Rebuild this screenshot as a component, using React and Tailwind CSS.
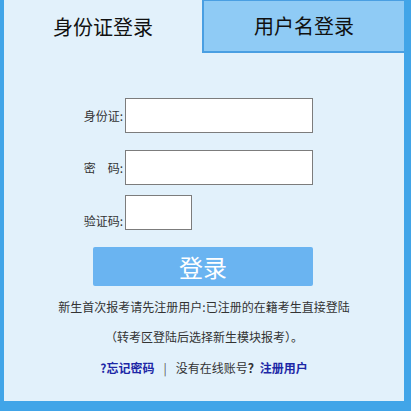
import React from "react";

const font = { fontFamily: '"Noto Sans CJK SC", "Noto Sans", sans-serif' };

const Row = ({ label, width, className = "" }) => (
  <div className={"flex items-center " + className}>
    <label className="w-[119px] text-right text-[12px] text-[#333]">{label}</label>
    <input
      type="text"
      className={"ml-[2px] h-[35px] border border-[#7c7c7c] bg-white outline-none " + width}
    />
  </div>
);

const App = () => {
  return (
    <div className="w-[411px] h-[411px] bg-[#41a5e8] pl-[4px] pr-[7px] pb-[10px]" style={font}>
      <div className="h-full bg-[#e2f1fb] flex flex-col">
        <div className="flex h-[53px]">
          <div className="w-[198px] flex items-center justify-center text-[20px] text-[#111]">
            身份证登录
          </div>
          <div className="flex-1 flex items-center justify-center text-[20px] text-[#111] bg-[#8fcbf5] border-l-2 border-b-2 border-t border-[#4a9fe2]">
            用户名登录
          </div>
        </div>

        <div className="flex flex-col mt-[45px]">
          <Row label="身份证:" width="w-[188px]" />
          <Row label="密　码:" width="w-[188px]" className="mt-[17px]" />
          <div className="flex items-end mt-[10px]">
            <label className="w-[119px] text-right text-[12px] text-[#333]">验证码:</label>
            <input
              type="text"
              className="ml-[2px] w-[67px] h-[35px] border border-[#7c7c7c] bg-white outline-none"
            />
          </div>
          <button className="ml-[89px] mt-[17px] w-[220px] h-[39px] rounded-[2px] bg-[#6ab4f1] text-white text-[24px] leading-none flex items-center justify-center">
            登录
          </button>
        </div>

        <div className="mt-[12px] text-[12px] text-[#333] text-center flex flex-col">
          <p className="h-[18px] leading-[18px]">新生首次报考请先注册用户:已注册的在籍考生直接登陆</p>
          <p className="mt-[12px] h-[18px] leading-[18px]">（转考区登陆后选择新生模块报考）。</p>
          <p className="mt-[13px] h-[18px] leading-[18px]">
            <a href="#" className="font-bold text-[#1d27a6]">?忘记密码</a>
            <span className="mx-[9px] text-[#555]">|</span>
            <span>没有在线账号<b className="font-bold text-[#333]">？</b></span>
            <a href="#" className="font-bold text-[#1d27a6]">注册用户</a>
          </p>
        </div>
      </div>
    </div>
  );
};

export default App;
